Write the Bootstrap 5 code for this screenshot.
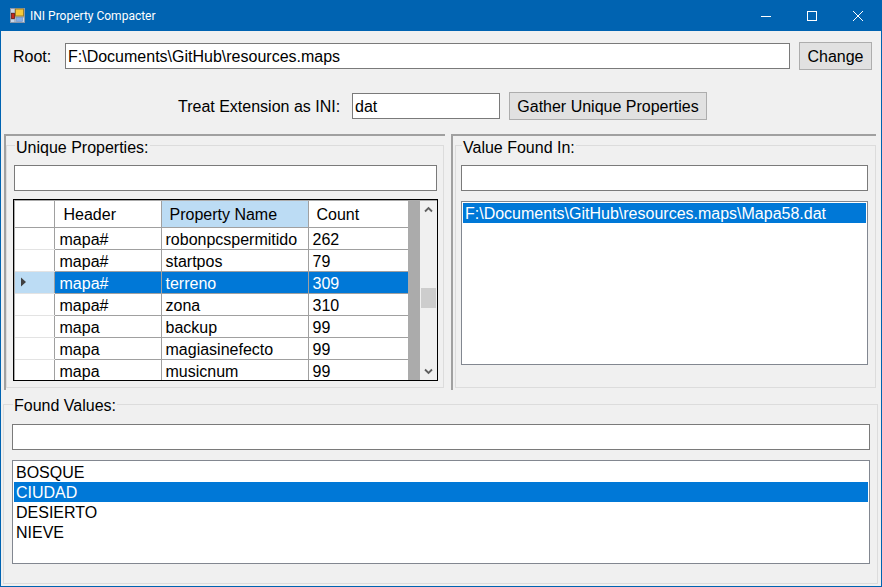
<!DOCTYPE html>
<html lang="en">
<head>
<meta charset="utf-8">
<title>INI Property Compacter</title>
<link href="https://cdn.jsdelivr.net/npm/bootstrap@5.3.0/dist/css/bootstrap.min.css" rel="stylesheet">
<style>
html,body{height:587px;overflow:hidden;background:#f0f0f0}
body{font-family:"Liberation Sans",Arial,sans-serif;font-size:16px;line-height:20px;color:#000}
.win-frame{width:882px;height:587px;border:1px solid #0063b1;border-top:0;background:#f0f0f0;position:relative}
.win-title{height:31px;background:#0063b1;color:#fff;margin:0 -1px;font:12px Roboto,"Noto Sans",sans-serif;padding-left:10px}
.win-title .ttl{margin-left:5px}
.ctl-wrap{margin-right:1px}
.ctl-box{width:46px;height:31px}
.root-row{height:61px;padding:11px 9px 0 12px}
.ext-row{height:42px;padding-left:177px}
.tbox{height:26px;border:1px solid #7a7a7a;background:#fff;padding:0 2px;line-height:25px;white-space:nowrap;margin-top:1px}
.wbtn{height:28px;background:#e1e1e1;border:1px solid #adadad;text-align:center;line-height:27px;padding:0;margin-left:9px}
.lbl-root{width:52px;line-height:30px}
.tb-root{width:725px}
.btn-change{width:73px}
.lbl-ext{width:174px;line-height:30px}
.tb-ext{width:148px}
.btn-gather{width:198px}
.split-row{height:256px;padding-left:3px}
.split-pane{border-top:2px solid #a0a0a0;border-left:2px solid #a0a0a0;position:relative}
.pane-l{width:441px}
.pane-r{width:425px;margin-left:6px}
.gbox{border:1px solid #dcdcdc;position:relative;height:243px;margin-top:9px}
.gcap{position:absolute;top:-7px;background:#f0f0f0;padding:0 1px;line-height:18px;white-space:nowrap}
.pane-l .gbox{margin-right:1px}
.pane-r .gbox{margin-left:2px}
.gcap-l{left:8px}
.gcap-r{left:6px}
.pane-l .tbox{margin:19px 0 0 7px;width:423px}
.dgrid{margin:8px 0 0 6px;width:425px;height:182px;border:1px solid #000;padding:1px 0 0 1px;background:#ababab;overflow:hidden}
.dtable{table-layout:fixed;width:393px;height:0;background:#fff;border-collapse:collapse}
.dtable th,.dtable td{font-weight:400;height:22px;padding:3px 0 0 4px;border-right:1px solid #a0a0a0;border-bottom:1px solid #a0a0a0;white-space:nowrap;overflow:hidden;line-height:18px}
.dtable th{height:26px;padding-left:8px}
.dtable td:nth-child(2){padding-left:5px}
.dtable th:nth-child(2){padding-left:9px}
.dtable .rh{padding:0;border-right:1px solid #a0a0a0;border-bottom:1px solid #e3e3e3}
.dtable th.rh{border-bottom:1px solid #a0a0a0}
.dtable tr>*:last-child{border-right:0}
.dtable th.hl{background:#bcdcf4}
.dtable tr.sel td{background:#0078d7;color:#fff}
.dtable tr.sel td.rh{background:#bcdcf4;vertical-align:middle}
.sb-v{width:17px;background:#f0f0f0;position:relative}
.sb-thumb{position:absolute;left:1px;top:87px;width:15px;height:20px;background:#cdcdcd}
.sb-up,.sb-dn{position:absolute;left:4px}
.sb-up{top:5px}
.sb-dn{bottom:5px}
.pane-r .tbox{margin:19px 0 0 5px;width:407px}
.lbox{border:1px solid #828790;background:#fff;overflow:hidden;padding:1px}
.pane-r .lbox{margin:10px 0 0 5px;width:407px;height:164px}
.lbox-item{height:20px;line-height:22px;padding-left:2px;white-space:nowrap}
.lbox-item.on{background:#0078d7;color:#fff}
.bottom-box{margin:14px 0 0 2px;height:180px;width:875px;border:1px solid #dcdcdc;position:relative}
.bottom-box .gcap{left:9px;top:-8px}
.bottom-box .tbox{margin:19px 0 0 8px;width:858px}
.bottom-box .lbox{margin:10px 0 0 8px;width:858px;height:104px}
</style>
</head>
<body>
<div class="win-frame">
  <div class="win-title d-flex align-items-center">
    <svg width="15" height="15" viewBox="0 0 15 15">
      <rect x="0.5" y="0.5" width="14" height="14" fill="#c9d6e8" stroke="#8a97aa"/>
      <path d="M5 .5V14.5M.5 5H5M.5 11H5M5 9H14.5" stroke="#8a97aa" fill="none"/>
      <rect x="5.5" y="1" width="8" height="7" fill="#f6c93a" stroke="#9a7f2a"/>
      <rect x="1.5" y="5.5" width="3" height="5" fill="#c8281e" stroke="#6a1a12" stroke-width=".8"/>
      <rect x="6.5" y="9.5" width="6" height="4" fill="#86ade6" stroke="#6f8fc0" stroke-width=".6"/>
    </svg>
    <span class="ttl">INI Property Compacter</span>
    <div class="ms-auto d-flex ctl-wrap">
      <div class="ctl-box d-flex align-items-center justify-content-center"><svg width="10" height="10" viewBox="0 0 10 10"><path d="M0 5.5H10" stroke="#fff" fill="none"/></svg></div>
      <div class="ctl-box d-flex align-items-center justify-content-center"><svg width="10" height="10" viewBox="0 0 10 10"><rect x=".5" y=".5" width="9" height="9" stroke="#fff" fill="none"/></svg></div>
      <div class="ctl-box d-flex align-items-center justify-content-center"><svg width="10" height="10" viewBox="0 0 10 10"><path d="M0 0L10 10M10 0L0 10" stroke="#fff" fill="none"/></svg></div>
    </div>
  </div>

  <div class="root-row d-flex align-items-start">
    <span class="lbl-root">Root:</span>
    <div class="tbox tb-root">F:\Documents\GitHub\resources.maps</div>
    <button class="wbtn btn-change">Change</button>
  </div>

  <div class="ext-row d-flex align-items-start">
    <span class="lbl-ext">Treat Extension as INI:</span>
    <div class="tbox tb-ext">dat</div>
    <button class="wbtn btn-gather">Gather Unique Properties</button>
  </div>

  <div class="split-row d-flex">
    <div class="split-pane pane-l">
      <div class="gbox">
        <span class="gcap gcap-l">Unique Properties:</span>
        <div class="tbox"></div>
        <div class="dgrid d-flex align-items-start">
          <table class="dtable">
            <colgroup><col style="width:39px"><col style="width:107px"><col style="width:147px"><col style="width:100px"></colgroup>
            <tr><th class="rh"></th><th>Header</th><th class="hl">Property Name</th><th>Count</th></tr>
            <tr><td class="rh"></td><td>mapa#</td><td>robonpcspermitido</td><td>262</td></tr>
            <tr><td class="rh"></td><td>mapa#</td><td>startpos</td><td>79</td></tr>
            <tr class="sel"><td class="rh"><svg class="d-block ms-1" width="10" height="10" viewBox="0 0 10 10"><path d="M2 0.5L7 5L2 9.5Z" fill="#404040"/></svg></td><td>mapa#</td><td>terreno</td><td>309</td></tr>
            <tr><td class="rh"></td><td>mapa#</td><td>zona</td><td>310</td></tr>
            <tr><td class="rh"></td><td>mapa</td><td>backup</td><td>99</td></tr>
            <tr><td class="rh"></td><td>mapa</td><td>magiasinefecto</td><td>99</td></tr>
            <tr><td class="rh"></td><td>mapa</td><td>musicnum</td><td>99</td></tr>
          </table>
          <div class="flex-grow-1"></div>
          <div class="sb-v align-self-stretch">
            <svg class="sb-up" width="9" height="7" viewBox="0 0 9 7"><path d="M1 5.5L4.5 2L8 5.5" stroke="#606060" stroke-width="1.8" fill="none"/></svg>
            <div class="sb-thumb"></div>
            <svg class="sb-dn" width="9" height="7" viewBox="0 0 9 7"><path d="M1 1.5L4.5 5L8 1.5" stroke="#606060" stroke-width="1.8" fill="none"/></svg>
          </div>
        </div>
      </div>
    </div>
    <div class="split-pane pane-r">
      <div class="gbox">
        <span class="gcap gcap-r">Value Found In:</span>
        <div class="tbox"></div>
        <div class="lbox"><div class="lbox-item on">F:\Documents\GitHub\resources.maps\Mapa58.dat</div></div>
      </div>
    </div>
  </div>

  <div class="bottom-box">
    <span class="gcap">Found Values:</span>
    <div class="tbox"></div>
    <div class="lbox">
      <div class="lbox-item">BOSQUE</div>
      <div class="lbox-item on">CIUDAD</div>
      <div class="lbox-item">DESIERTO</div>
      <div class="lbox-item">NIEVE</div>
    </div>
  </div>
</div>
<script src="https://cdn.jsdelivr.net/npm/bootstrap@5.3.0/dist/js/bootstrap.bundle.min.js"></script>
</body>
</html>
